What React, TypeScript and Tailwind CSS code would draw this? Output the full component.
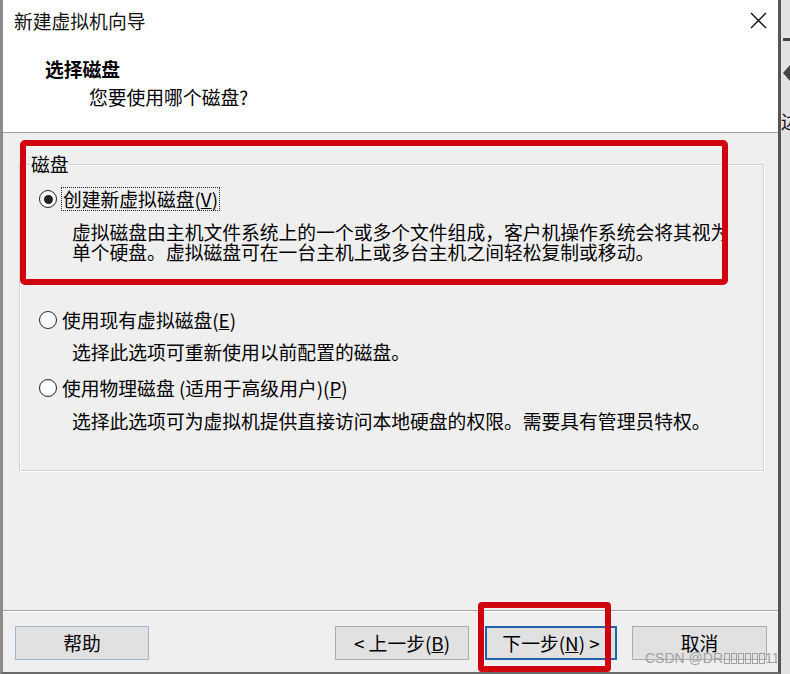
import React from "react";

/* ========= Sous-composants ========= */
function Radio({ checked }: { checked?: boolean }) {
  return (
    <span className="flex h-[18px] w-[18px] shrink-0 items-center justify-center rounded-full border border-[#222] bg-white">
      {checked && <span className="h-[9px] w-[9px] rounded-full bg-[#222]" />}
    </span>
  );
}

function Btn({
  children,
  className = "",
}: {
  children: React.ReactNode;
  className?: string;
}) {
  return (
    <div
      className={`flex h-[34px] items-center justify-center bg-[#e1e1e1] text-[18.8px] leading-[20px] text-black ${className}`}
    >
      {children}
    </div>
  );
}

// caractères non affichables du pseudo (tofu)
const Tofu = () => (
  <span className="mx-[0.5px] inline-block h-[11px] w-[6px] border border-current align-[-1px]" />
);

/* ========= Component ========= */
export default function App() {
  return (
    <div className="relative flex h-[674px] w-[790px] overflow-hidden bg-[#e4e4e4] font-['Noto_Sans_CJK_SC',sans-serif] text-black">
      {/* Fenêtre de l'assistant */}
      <div className="flex h-full w-[781px] flex-col border-b-2 border-l-[3px] border-r-[3px] border-b-[#6a6a6a] border-l-[#8c8c8c] border-r-[#555]">
        {/* En-tête blanc */}
        <div className="h-[133px] border-b border-[#9f9f9f] bg-white">
          <div className="flex items-start justify-between pl-[11px] pr-[11px] pt-[9px]">
            <div className="text-[18.8px] leading-[24px] text-[#111]">新建虚拟机向导</div>
            <svg width="17" height="17" viewBox="0 0 17 17" className="mt-[3px]">
              <path d="M1 1 L16 16 M16 1 L1 16" stroke="#111" strokeWidth="1.4" fill="none" />
            </svg>
          </div>
          <div className="mt-[24px] pl-[42px] text-[18.8px] font-bold leading-[24px]">选择磁盘</div>
          <div className="mt-[4px] pl-[86px] text-[18.8px] leading-[24px]">您要使用哪个磁盘?</div>
        </div>

        {/* Corps gris */}
        <div className="flex-1 bg-[#efefef] pt-[21px]">
          <fieldset className="ml-[16px] w-[745px] border border-[#d2d2d2] pb-[39px] pl-[19px] shadow-[inset_1px_1px_0_#fff,1px_1px_0_#fff]">
            <legend className="-ml-[8px] text-[18.8px] leading-[20px]">磁盘</legend>

            {/* Option 1 */}
            <div className="mt-[15px] flex h-[20px] items-center gap-[4px]">
              <Radio checked />
              <span className="border border-dotted border-[#222] px-px text-[18.8px] leading-[22px]">
                创建新虚拟磁盘(<u>V</u>)
              </span>
            </div>
            <div className="mt-[13px] whitespace-nowrap pl-[33px] text-[18.8px] leading-[20px]">
              <div>虚拟磁盘由主机文件系统上的一个或多个文件组成，客户机操作系统会将其视为</div>
              <div>单个硬盘。虚拟磁盘可在一台主机上或多台主机之间轻松复制或移动。</div>
            </div>

            {/* Option 2 */}
            <div className="mt-[48px] flex h-[20px] items-center gap-[5px]">
              <Radio />
              <span className="text-[18.8px] leading-[20px]">
                使用现有虚拟磁盘(<u>E</u>)
              </span>
            </div>
            <div className="mt-[12px] pl-[33px] text-[18.8px] leading-[20px]">
              选择此选项可重新使用以前配置的磁盘。
            </div>

            {/* Option 3 */}
            <div className="mt-[16px] flex h-[20px] items-center gap-[5px]">
              <Radio />
              <span className="text-[18.8px] leading-[20px]">
                使用物理磁盘 (适用于高级用户)(<u>P</u>)
              </span>
            </div>
            <div className="mt-[13px] pl-[33px] text-[18.8px] leading-[20px]">
              选择此选项可为虚拟机提供直接访问本地硬盘的权限。需要具有管理员特权。
            </div>
          </fieldset>
        </div>

        {/* Pied : boutons */}
        <div className="flex h-[62px] items-start border-t border-[#a3a3a3] bg-[#efefef] pt-[15px] shadow-[inset_0_1px_0_#fff]">
          <Btn className="ml-[12px] w-[134px] border border-[#9fb4c8]">帮助</Btn>
          <div className="flex-1" />
          <Btn className="w-[134px] border border-[#adadad]">
            &lt; 上一步(<u>B</u>)
          </Btn>
          <Btn className="ml-[16px] w-[132px] border-2 border-[#1e62b0]">
            下一步(<u>N</u>) &gt;
          </Btn>
          <Btn className="ml-[15px] mr-[11px] w-[135px] border border-[#adadad]">取消</Btn>
        </div>
      </div>

      {/* Bande de la fenêtre voisine */}
      <div className="relative w-[9px] bg-[#e2e2e2]">
        <div className="mt-[38px] ml-[2px] h-[3px] w-[7px] bg-[#444]" />
        <div className="mt-[24px] ml-[2px] h-0 w-0 border-y-[8px] border-r-[7px] border-y-transparent border-r-[#444]" />
        <div className="mt-[30px] w-[9px] overflow-hidden whitespace-nowrap text-[18px] leading-[20px] text-[#111]">边</div>
      </div>

      {/* Annotations rouges */}
      <div className="absolute left-[20px] top-[140px] h-[145px] w-[708px] rounded-[5px] border-[6px] border-[#d0000f]" />
      <div className="absolute left-[478px] top-[602px] h-[70px] w-[133px] rounded-[4px] border-[6px] border-[#d0000f]" />

      {/* Filigrane */}
      <div className="absolute left-[645px] top-[649px] whitespace-nowrap font-['Liberation_Sans',sans-serif] text-[14px] leading-[18px] text-[#a0a0a0]">
        CSDN @DR
        <Tofu />
        <Tofu />
        <Tofu />
        <Tofu />
        <Tofu />
        <Tofu />
        11
      </div>
    </div>
  );
}
